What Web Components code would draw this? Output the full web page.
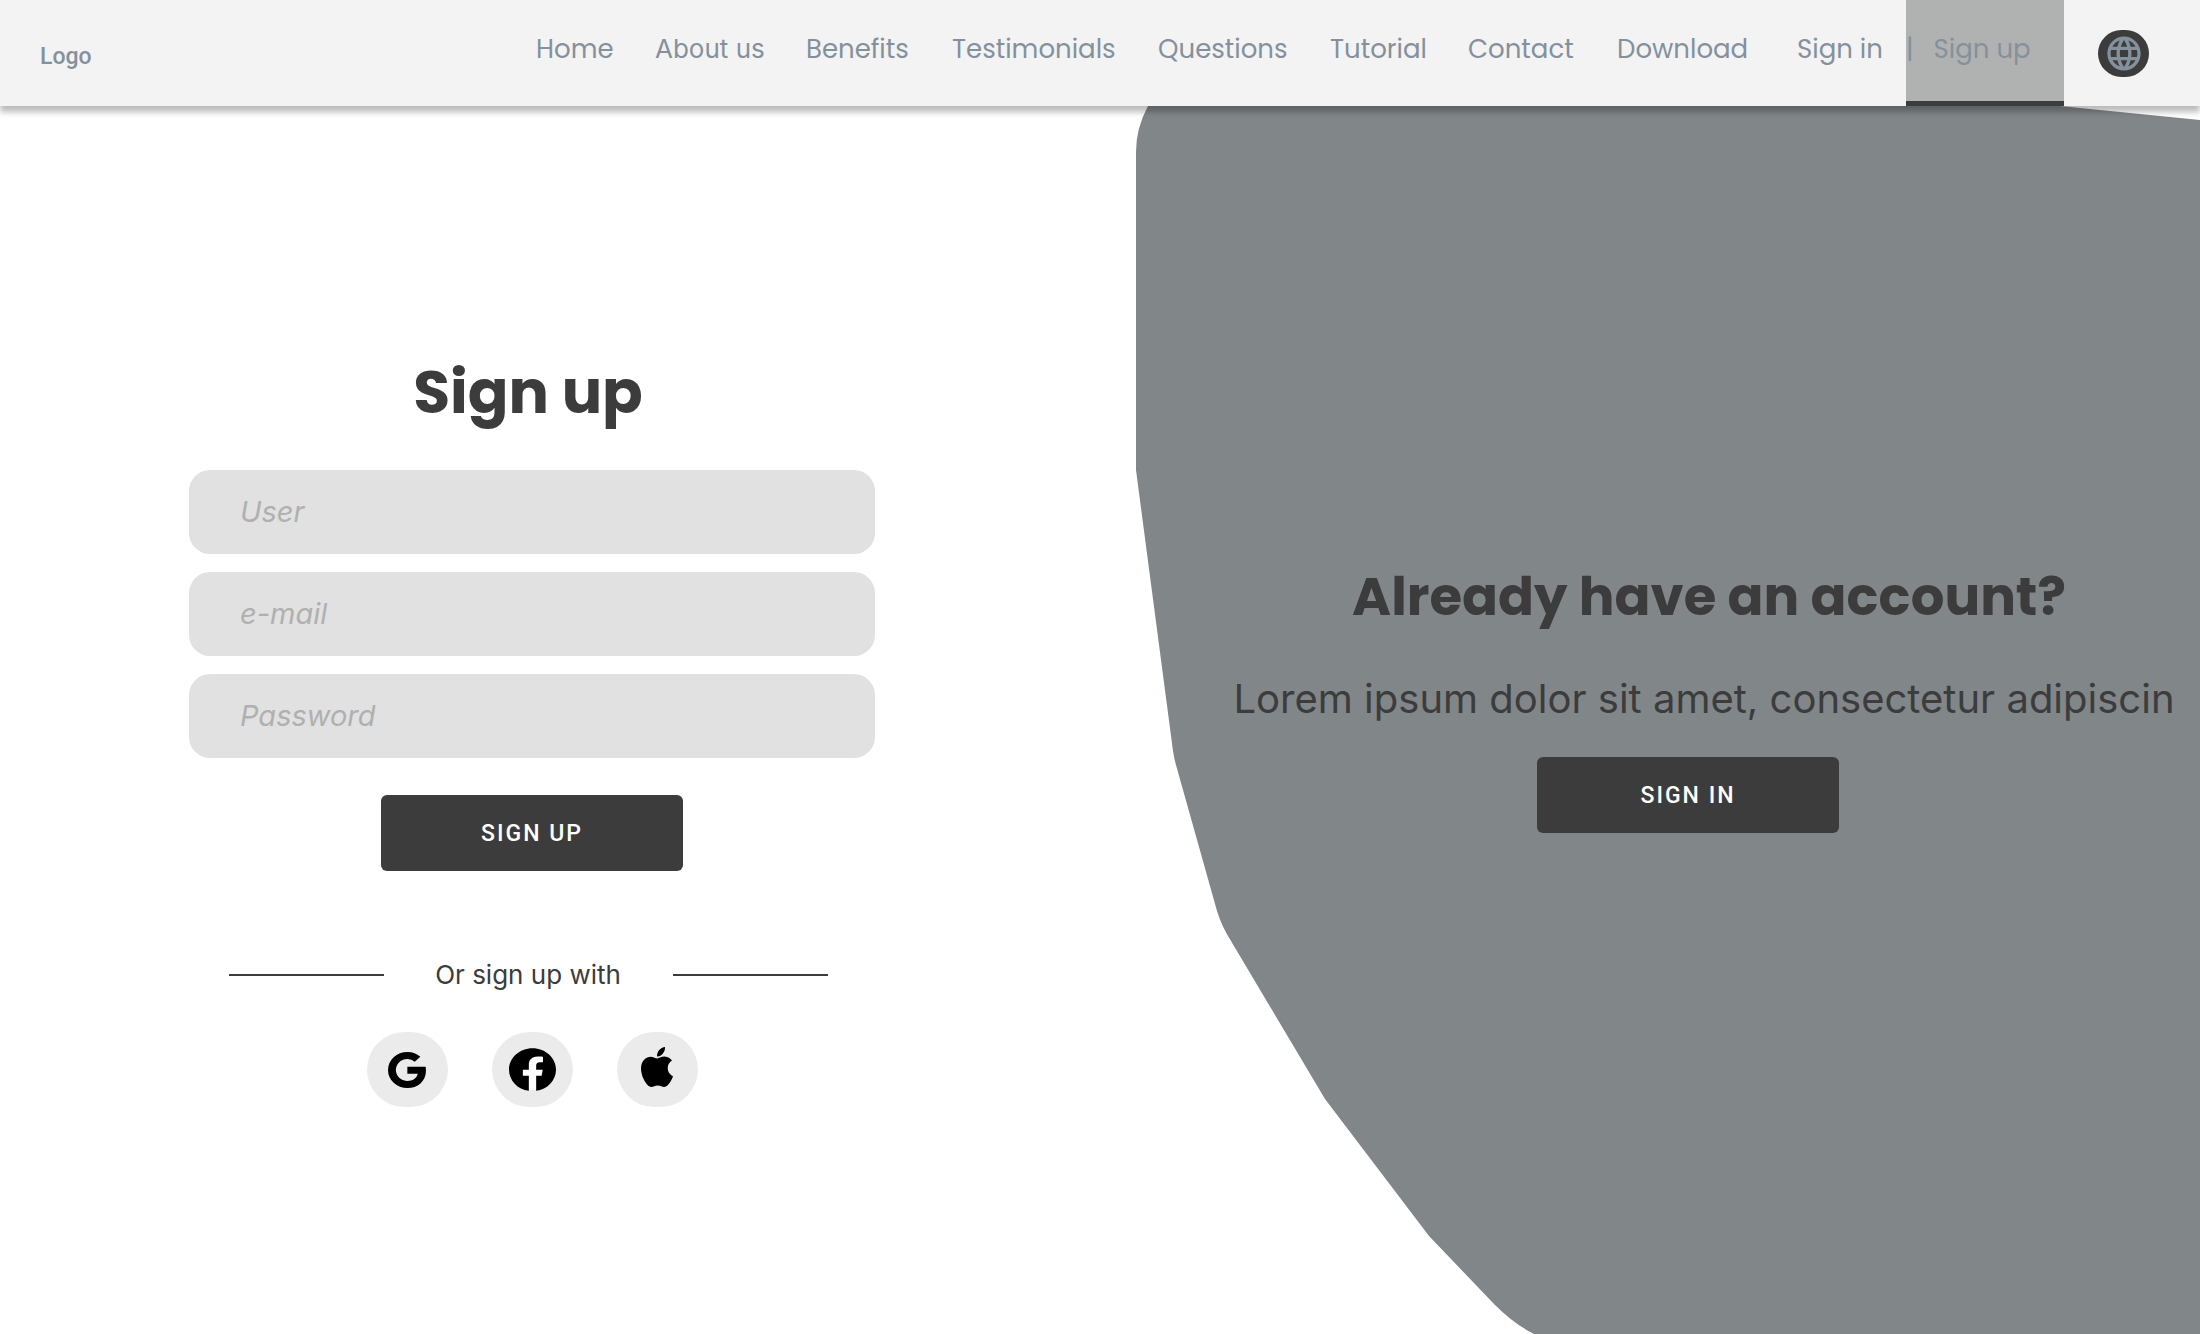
<!DOCTYPE html>
<html lang="en">
<head>
<meta charset="utf-8">
<title>Sign up</title>
<style>
  html, body { margin: 0; }
  body {
    --ink: #3c3c3c;
    --muted: #84919c;
    --bar: #f3f3f3;
    --tile: #b0b2b1;
    --field: #e1e1e1;
    --placeholder: #b0b0b0;
    --chip: #ebebeb;
    --panel: #818689;
    --display: Poppins, Inter, "Noto Sans", sans-serif;
    --text: Inter, "Noto Sans", sans-serif;
    --label: Roboto, Inter, sans-serif;
    background: #fff;
    color: var(--ink);
    font-family: var(--text);
  }
</style>
</head>
<body>
<signup-page></signup-page>

<script>
const define = (name, html) => {
  const template = document.createElement('template');
  template.innerHTML = html;
  customElements.define(name, class extends HTMLElement {
    constructor() {
      super();
      this.attachShadow({ mode: 'open' }).append(template.content.cloneNode(true));
    }
  });
};

/* One entry of the top navigation */
define('nav-link', `
  <style>
    :host { display: block; }
    a {
      display: flex; box-sizing: border-box; height: 106px; gap: 20px;
      font: 400 26px/98px var(--display); color: var(--muted);
      text-decoration: none; white-space: nowrap;
    }
    :host([active]) a { background: var(--tile); border-bottom: 5px solid var(--ink); }
    :host([plain]) a { font-family: var(--text); }
  </style>
  <a href="#"><slot name="divider"></slot><slot></slot></a>`);

define('language-button', `
  <style>
    :host { display: block; }
    button {
      display: grid; place-items: center; width: 51px; height: 47px;
      padding: 0; border: 0; border-radius: 24px; background: var(--ink); color: var(--muted);
    }
    svg { display: block; width: 40px; height: 41px; fill: currentColor; }
  </style>
  <button type="button" aria-label="Language">
    <svg viewBox="0 0 24 24" preserveAspectRatio="none" aria-hidden="true"><path d="M11.99 2C6.47 2 2 6.48 2 12s4.47 10 9.99 10C17.52 22 22 17.52 22 12S17.52 2 11.99 2zm6.93 6h-2.95a15.65 15.65 0 0 0-1.38-3.56A8.03 8.03 0 0 1 18.92 8zM12 4.04c.83 1.2 1.48 2.53 1.91 3.96h-3.82c.43-1.43 1.08-2.76 1.91-3.96zM4.26 14C4.1 13.36 4 12.69 4 12s.1-1.36.26-2h3.38c-.08.66-.14 1.32-.14 2s.06 1.34.14 2H4.26zm.82 2h2.95c.32 1.25.78 2.45 1.38 3.56A7.987 7.987 0 0 1 5.08 16zm2.95-8H5.08a7.987 7.987 0 0 1 4.33-3.56A15.65 15.65 0 0 0 8.03 8zM12 19.96c-.83-1.2-1.48-2.53-1.91-3.96h3.82c-.43 1.43-1.08 2.76-1.91 3.96zM14.34 14H9.66c-.09-.66-.16-1.32-.16-2s.07-1.35.16-2h4.68c.09.65.16 1.32.16 2s-.07 1.34-.16 2zm.25 5.56c.6-1.11 1.06-2.31 1.38-3.56h2.95a8.03 8.03 0 0 1-4.33 3.56zM16.36 14c.08-.66.14-1.32.14-2s-.06-1.34-.14-2h3.38c.16.64.26 1.31.26 2s-.1 1.36-.26 2h-3.38z"/></svg>
  </button>`);

define('site-header', `
  <style>
    :host {
      display: block; position: relative; z-index: 1; background: var(--bar);
      box-shadow: 0 6px 6px rgba(0, 0, 0, .27);
    }
    header { display: flex; align-items: flex-start; height: 106px; padding: 0 51px 0 40px; }
    .logo { margin-right: auto; font: 500 23px/114px var(--label); color: var(--muted); text-decoration: none; }
    nav {
      flex: 0 1 1528px; display: grid; margin-right: 34px;
      grid-template-columns: 119fr 151fr 146fr 206fr 172fr 138fr 149fr 180fr 109fr 158fr;
    }
    language-button { align-self: center; }
  </style>
  <header>
    <a class="logo" href="#">Logo</a>
    <nav>
      <nav-link>Home</nav-link>
      <nav-link plain>About us</nav-link>
      <nav-link>Benefits</nav-link>
      <nav-link>Testimonials</nav-link>
      <nav-link>Questions</nav-link>
      <nav-link>Tutorial</nav-link>
      <nav-link>Contact</nav-link>
      <nav-link>Download</nav-link>
      <nav-link>Sign in</nav-link>
      <nav-link active><span slot="divider">|</span>Sign up</nav-link>
    </nav>
    <language-button></language-button>
  </header>`);

define('action-button', `
  <style>
    :host { display: block; }
    button {
      display: block; box-sizing: border-box; width: 302px; height: 76px; padding: 2px 0 0;
      border: 0; border-radius: 6px; background: var(--ink); color: #fff;
      font: 500 23px/74px var(--label); letter-spacing: 2px;
    }
  </style>
  <button type="button"><slot></slot></button>`);

/* A labelled text box; type and hint come from attributes */
customElements.define('form-field', class extends HTMLElement {
  connectedCallback() {
    const root = this.attachShadow({ mode: 'open' });
    root.innerHTML = `
      <style>
        :host { display: block; }
        input {
          display: block; box-sizing: border-box; width: 100%; height: 84px; padding: 0 51px;
          border: 0; border-radius: 21px; background: var(--field); color: var(--ink);
          font: italic 400 29px/84px var(--text);
        }
        input::placeholder { color: var(--placeholder); opacity: 1; }
      </style>
      <input>`;
    const input = root.querySelector('input');
    input.type = this.getAttribute('type');
    input.placeholder = this.getAttribute('hint');
    input.setAttribute('aria-label', this.getAttribute('hint'));
  }
});

define('social-button', `
  <style>
    :host { display: block; }
    button {
      display: grid; place-items: center; width: 81px; height: 75px; padding: 0;
      border: 0; border-radius: 38px; background: var(--chip); color: #000;
    }
    ::slotted(svg) { display: block; fill: currentColor; }
  </style>
  <button type="button"><slot></slot></button>`);

define('signup-form', `
  <style>
    :host { display: block; }
    form { display: flex; flex-direction: column; align-items: center; }
    h1, .or { margin: 0 8px 0 0; }
    h1 { font: 700 60px/90px var(--display); }
    .fields { display: flex; flex-direction: column; gap: 18px; width: 686px; margin-top: 33px; }
    action-button { margin-top: 37px; }
    .or {
      display: flex; justify-content: space-between; align-items: center;
      width: 599px; padding-top: 84px; font-size: 26px; line-height: 40px;
    }
    .or::before, .or::after { content: ""; width: 155px; height: 2px; background: var(--ink); }
    .social { display: flex; gap: 44px; margin-top: 37px; }
    .google { width: 38px; height: 36px; }
    .facebook { width: 47px; height: 43px; }
    .apple { width: 32px; height: 40px; margin-bottom: 5px; }
  </style>
  <form>
    <h1>Sign up</h1>
    <div class="fields">
      <form-field type="text" hint="User"></form-field>
      <form-field type="email" hint="e-mail"></form-field>
      <form-field type="password" hint="Password"></form-field>
    </div>
    <action-button>SIGN UP</action-button>
    <div class="or">Or sign up with</div>
    <div class="social">
      <social-button>
        <svg class="google" viewBox="0 0 15.7 16" preserveAspectRatio="none" role="img" aria-label="Google"><path d="M15.545 6.558a9.42 9.42 0 0 1 .139 1.626c0 2.434-.87 4.492-2.384 5.885h.002C11.978 15.292 10.158 16 8 16A8 8 0 1 1 8 0a7.689 7.689 0 0 1 5.352 2.082l-2.284 2.284A4.347 4.347 0 0 0 8 3.166c-2.087 0-3.86 1.408-4.492 3.304a4.792 4.792 0 0 0 0 3.063h.003c.635 1.893 2.405 3.301 4.492 3.301 1.078 0 2.004-.276 2.722-.764h-.003a3.702 3.702 0 0 0 1.599-2.431H8V6.558h7.545z"/></svg>
      </social-button>
      <social-button>
        <svg class="facebook" viewBox="0 0 24 24" preserveAspectRatio="none" role="img" aria-label="Facebook"><circle cx="12" cy="12" r="11.5" fill="#fff"/><path d="M24 12.073c0-6.627-5.373-12-12-12s-12 5.373-12 12c0 5.99 4.388 10.954 10.125 11.854v-8.385H7.078v-3.47h3.047V9.43c0-3.007 1.792-4.669 4.533-4.669 1.312 0 2.686.235 2.686.235v2.953H15.83c-1.491 0-1.956.925-1.956 1.874v2.25h3.328l-.532 3.47h-2.796v8.385C19.612 23.027 24 18.062 24 12.073z"/></svg>
      </social-button>
      <social-button>
        <svg class="apple" viewBox="4 32 376.5 448" preserveAspectRatio="none" role="img" aria-label="Apple"><path d="M318.7 268.7c-.2-36.7 16.4-64.4 50-84.8-18.8-26.9-47.2-41.7-84.7-44.6-35.5-2.8-74.3 20.7-88.5 20.7-15 0-49.4-19.7-76.4-19.7C63.3 141.2 4 184.8 4 273.5q0 39.3 14.4 81.2c12.8 36.7 59 126.7 107.2 125.2 25.2-.6 43-17.9 75.8-17.9 31.8 0 48.3 17.9 76.4 17.9 48.6-.7 90.4-82.5 102.6-119.3-65.2-30.7-61.7-90-61.7-91.9zm-56.6-164.2c27.3-32.4 24.8-61.9 24-72.5-24.1 1.4-52 16.4-67.9 34.9-17.5 19.8-27.8 44.3-25.6 71.9 26.1 2 49.9-11.4 69.5-34.3z"/></svg>
      </social-button>
    </div>
  </form>`);

define('signin-panel', `
  <style>
    :host { display: block; position: relative; }
    .shape { position: absolute; inset: 0; width: 100%; height: 100%; fill: var(--panel); }
    .content {
      position: relative; display: flex; flex-direction: column; align-items: center;
      padding: 446px 28px 0 100px;
    }
    h2 { margin: 0; padding-left: 10px; font: 700 53px/90px var(--display); white-space: nowrap; }
    p { margin: 27px 0 0; font-size: 40px; line-height: 60px; white-space: nowrap; }
    .actions { margin-top: 28px; padding-right: 32px; }
  </style>
  <svg class="shape" viewBox="0 0 1064 1228" preserveAspectRatio="none" aria-hidden="true">
    <path d="M12 0H924L1064 14V1228H398Q378 1218 359 1199L293 1130L189 993L95 835Q86 821 81 805L40 659Q38 652 37 645L0 364V46Q0 22 12 0Z"/>
  </svg>
  <div class="content">
    <h2>Already have an account?</h2>
    <p>Lorem ipsum dolor sit amet, consectetur adipiscin</p>
    <div class="actions"><action-button>SIGN IN</action-button></div>
  </div>`);

define('signup-page', `
  <style>
    :host { display: flex; flex-direction: column; min-height: 100vh; }
    main { flex: 1; display: grid; grid-template-columns: minmax(0, 1136fr) minmax(0, 1064fr); }
    signup-form { padding: 241px 72px 0 0; }
  </style>
  <site-header></site-header>
  <main>
    <signup-form></signup-form>
    <signin-panel></signin-panel>
  </main>`);
</script>
</body>
</html>
